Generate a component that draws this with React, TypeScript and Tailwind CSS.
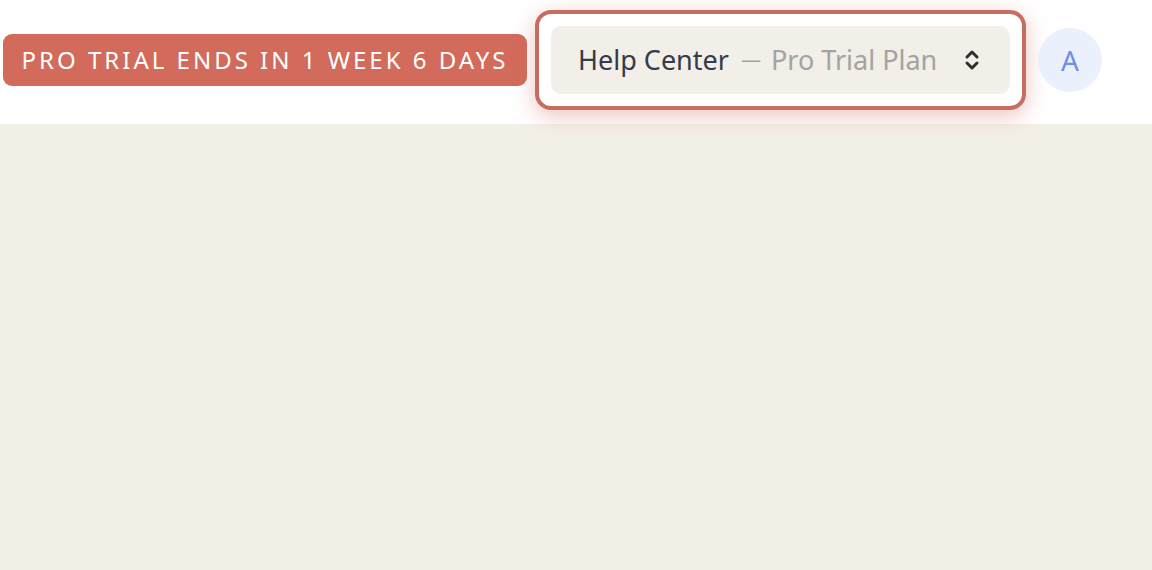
import React from "react";
import { ChevronsUpDown } from "lucide-react";

export default function App() {
  return (
    <div className="w-[1152px] h-[570px] flex flex-col bg-[#f3f0e8]" style={{ fontFamily: '"Noto Sans", "Open Sans", sans-serif' }}>
      <header className="h-[124px] bg-white flex items-center pl-[3px] pb-[4px] shrink-0">
        <div className="h-[52px] w-[524px] rounded-[9px] bg-[#d26b5b] flex items-center justify-center text-white text-[24px] tracking-[0.125em] uppercase">
          Pro Trial Ends in 1 Week 6 Days
        </div>
        <div className="ml-[8px] w-[491px] h-[100px] rounded-[16px] border-[4px] border-[#c86c5f] bg-white p-[12px] shadow-[0_6px_22px_rgba(210,107,91,0.4)]">
          <div className="h-full rounded-[10px] bg-[#f1efe8] flex items-center pl-[27px] pr-[26px] text-[27px]">
            <span className="text-[#353b48]">Help Center</span>
            <span className="text-[#a3a3a3] ml-[12px] mr-[10px] text-[20px]">—</span>
            <span className="text-[#a3a3a3]">Pro Trial Plan</span>
            <ChevronsUpDown className="ml-auto text-[#2f2f2f]" size={24} strokeWidth={3} />
          </div>
        </div>
        <div className="ml-[12px] w-[64px] h-[64px] rounded-full bg-[#eaf1fd] flex items-center justify-center text-[#6f8fe6] text-[28px]">
          A
        </div>
      </header>
      <main className="flex-1" />
    </div>
  );
}
